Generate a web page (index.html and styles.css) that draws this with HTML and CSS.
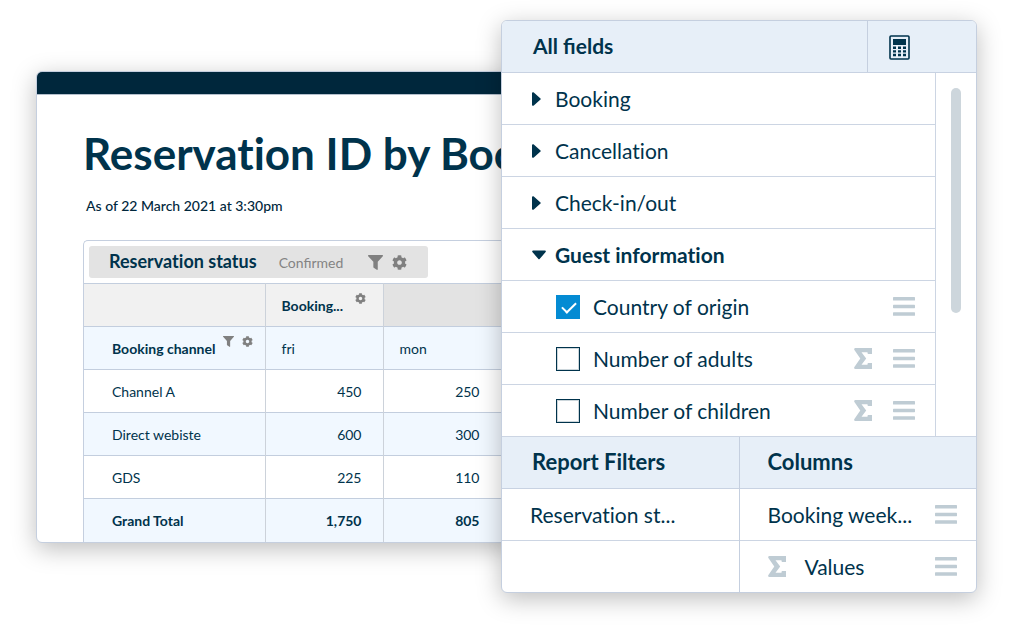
FILE: index.html
```html
<!DOCTYPE html>
<html lang="en">
<head>
<meta charset="utf-8">
<title>Reservation ID by Booking</title>
<link rel="stylesheet" href="styles.css">
</head>
<body>
<svg class="sprite" aria-hidden="true">
  <symbol id="funnel" viewBox="0 0 16 16"><path d="M.7 0h14.6c.7 0 .9.7.5 1.200L10.400 7.300v7.900c0 .6-.6.9-1.100.6L6.100 13.500a1 1 0 0 1-.4-.8V7.300L.2 1.200C-.2.7 0 0 .7 0z"/></symbol>
  <symbol id="gear" viewBox="0 0 512 512"><path d="M487.400 315.700l-42.600-24.600c4.300-23.200 4.300-47 0-70.200l42.600-24.600c4.900-2.800 7.100-8.600 5.500-14-11.100-35.600-30-67.800-54.700-94.600-3.800-4.100-10-5.100-14.800-2.300L380.800 110c-17.900-15.400-38.500-27.300-60.800-35.100V25.800c0-5.600-3.900-10.500-9.400-11.700-36.700-8.200-74.300-7.800-109.200 0-5.500 1.200-9.400 6.100-9.400 11.700V75c-22.200 7.900-42.800 19.800-60.800 35.100L88.700 85.500c-4.900-2.800-11-1.900-14.800 2.300-24.700 26.700-43.600 58.900-54.700 94.600-1.700 5.400.6 11.200 5.500 14L67.300 221c-4.300 23.200-4.300 47 0 70.200l-42.600 24.600c-4.900 2.800-7.100 8.600-5.500 14 11.100 35.600 30 67.800 54.700 94.600 3.800 4.100 10 5.100 14.800 2.300l42.600-24.600c17.900 15.400 38.500 27.300 60.800 35.100v49.200c0 5.600 3.900 10.500 9.400 11.700 36.700 8.200 74.300 7.800 109.200 0 5.500-1.200 9.400-6.100 9.400-11.700v-49.200c22.200-7.900 42.800-19.800 60.800-35.100l42.600 24.600c4.900 2.800 11 1.900 14.800-2.300 24.700-26.700 43.600-58.900 54.700-94.600 1.500-5.500-.7-11.300-5.600-14.100zM256 336c-44.100 0-80-35.900-80-80s35.900-80 80-80 80 35.900 80 80-35.900 80-80 80z"/></symbol>
  <symbol id="sigma" viewBox="0 0 18 21"><path d="M1.500 0H18v6h-3.500c-.5 0-1-.5-1-1v-.8H7.500l4.700 6.300L7.500 16.800h6V16c0-.5.5-1 1-1H18v6H1.500C.4 21-.2 19.800.4 19L6.300 10.500.4 2C-.2 1.200.4 0 1.500 0z"/></symbol>
  <symbol id="bars" viewBox="0 0 22 19"><rect y="0" width="22" height="3.500" rx=".6"/><rect y="7.700" width="22" height="3.500" rx=".6"/><rect y="15.300" width="22" height="3.500" rx=".6"/></symbol>
  <symbol id="calc" viewBox="0 0 21 25"><rect x="1" y="1" width="19" height="23" rx="1" fill="none" stroke="currentColor" stroke-width="1.600"/><path d="M4 4h13v6H4zM4 11.500h3v2.500H4zM9 11.500h3v2.500H9zM14 11.500h3v2.500h-3zM4 15.200h3v2.400H4zM9 15.200h3v2.400H9zM14 15.200h3v2.400h-3zM4 18.800h3v2.400H4zM9 18.800h3v2.400H9zM14 18.800h3v2.400h-3z"/></symbol>
  <symbol id="caret" viewBox="0 0 9 14"><path d="M0 1.200C0 .2 1 -.2 1.800.6L8.500 6.400c.4.3.4.9 0 1.200L1.800 13.400C1 14.200 0 13.800 0 12.800z"/></symbol>
  <symbol id="caret-down" viewBox="0 0 14 9"><path d="M1.200 0C.2 0-.2 1 .6 1.800L6.400 8.500c.3.4.9.4 1.200 0L13.400 1.800C14.200 1 13.800 0 12.800 0z"/></symbol>
</svg>
<main class="stage">
  <section class="report">
    <div class="report-bar"></div>
    <div class="report-body">
      <h1 class="report-title">Reservation ID by Booking</h1>
      <p class="report-date">As of 22 March 2021 at 3:30pm</p>
      <div class="grid">
        <div class="filter-row">
          <div class="filter-chip">
            <strong class="filter-name">Reservation status</strong>
            <span class="filter-value">Confirmed</span>
            <button class="icon-button" aria-label="Filter"><svg class="icon-md"><use href="#funnel"/></svg></button>
            <button class="icon-button" aria-label="Settings"><svg class="icon-md"><use href="#gear"/></svg></button>
          </div>
        </div>
        <table class="pivot">
          <colgroup><col class="col-name"><col class="col-day"><col class="col-day"><col></colgroup>
          <thead>
            <tr class="head-top"><th></th><th><span class="cell-tools tools-wide">Booking...<button class="icon-button tool-raised" aria-label="Column settings"><svg class="icon-sm"><use href="#gear"/></svg></button></span></th><th class="blank"></th><th class="blank"></th></tr>
            <tr class="tint"><th><span class="cell-tools">Booking channel<button class="icon-button tool-raised" aria-label="Filter channel"><svg class="icon-sm"><use href="#funnel"/></svg></button><button class="icon-button tool-raised" aria-label="Channel settings"><svg class="icon-sm"><use href="#gear"/></svg></button></span></th><th class="day">fri</th><th class="day">mon</th><th></th></tr>
          </thead>
          <tbody>
            <tr><td>Channel A</td><td class="num">450</td><td class="num">250</td><td></td></tr>
            <tr class="tint"><td>Direct webiste</td><td class="num">600</td><td class="num">300</td><td></td></tr>
            <tr><td>GDS</td><td class="num">225</td><td class="num">110</td><td></td></tr>
            <tr class="tint total"><td>Grand Total</td><td class="num">1,750</td><td class="num">805</td><td></td></tr>
          </tbody>
        </table>
      </div>
    </div>
  </section>

  <aside class="panel">
    <header class="panel-head">
      <h2 class="head-label">All fields</h2>
      <button class="calc-button" aria-label="Calculated field"><svg class="icon-calc"><use href="#calc"/></svg></button>
    </header>
    <div class="fields">
      <ul class="field-list">
        <li class="row"><button class="group"><svg class="caret"><use href="#caret"/></svg>Booking</button></li>
        <li class="row"><button class="group"><svg class="caret"><use href="#caret"/></svg>Cancellation</button></li>
        <li class="row"><button class="group"><svg class="caret"><use href="#caret"/></svg>Check-in/out</button></li>
        <li class="row"><button class="group open"><svg class="caret"><use href="#caret-down"/></svg>Guest information</button></li>
        <li class="row field"><label class="field-label"><input type="checkbox" class="check" checked>Country of origin</label><svg class="bars"><use href="#bars"/></svg></li>
        <li class="row field"><label class="field-label"><input type="checkbox" class="check">Number of adults</label><svg class="sigma"><use href="#sigma"/></svg><svg class="bars"><use href="#bars"/></svg></li>
        <li class="row field"><label class="field-label"><input type="checkbox" class="check">Number of children</label><svg class="sigma"><use href="#sigma"/></svg><svg class="bars"><use href="#bars"/></svg></li>
      </ul>
      <div class="scroll"><div class="thumb"></div></div>
    </div>
    <div class="zones">
      <section class="zone">
        <h2 class="zone-head">Report Filters</h2>
        <div class="row zone-row">Reservation st...</div>
        <div class="row zone-row"></div>
      </section>
      <section class="zone zone-columns">
        <h2 class="zone-head">Columns</h2>
        <div class="row zone-row"><span class="zone-text">Booking week...</span><svg class="bars"><use href="#bars"/></svg></div>
        <div class="row zone-row"><svg class="sigma"><use href="#sigma"/></svg><span class="zone-text">Values</span><svg class="bars"><use href="#bars"/></svg></div>
      </section>
    </div>
  </aside>
</main>
</body>
</html>
```
FILE: styles.css
```css
* { box-sizing: border-box; }
body {
  margin: 0;
  background: #fff;
  color: #00334c;
  font-family: Lato, "Liberation Sans", sans-serif;
  font-variant-ligatures: none;
  overflow-x: hidden;
}
h1, h2, p, ul { margin: 0; padding: 0; }
button {
  padding: 0;
  border: 0;
  background: none;
  color: inherit;
  font: inherit;
  font-variant-ligatures: none;
}
svg { display: block; flex: none; fill: currentColor; }
.sprite { position: absolute; width: 0; height: 0; }

.stage {
  display: flex;
  align-items: flex-start;
  padding: 20px 35px 36px 36px;
}

/* Report card */
.report {
  flex: 1;
  min-width: 0;
  margin: 51px -16px 0 0;
  border: 1px solid #c5cfdf;
  border-radius: 6px;
  background: #fff;
  box-shadow: 0 6px 24px rgba(0, 0, 0, 0.26);
  overflow: hidden;
}
.report-bar {
  height: 23px;
  border-bottom: 1px solid #b4bfcc;
  background: #00273c;
}
.report-body { padding: 32px 0 0 46px; }
.report-title {
  font-size: 44px;
  line-height: 52px;
  font-weight: 700;
  white-space: nowrap;
}
.report-date {
  margin: 18px 0 25px;
  padding-left: 3px;
  font-size: 14px;
  line-height: 18px;
  font-weight: 500;
  color: #00273c;
}
.grid {
  border: 1px solid #c5cfdf;
  border-width: 1px 0 0 1px;
  border-radius: 5px 0 0 0;
}
.filter-row { padding: 5px; }
.filter-chip {
  display: flex;
  align-items: baseline;
  width: 339px;
  height: 32px;
  padding-left: 20px;
  border-radius: 3px;
  background: #e3e3e3;
}
.filter-name { margin-right: 22px; font-size: 18px; line-height: 30px; }
.filter-value {
  margin-right: 25px;
  font-size: 14px;
  font-variant-ligatures: normal;
  color: #848484;
}
.icon-button { display: block; margin-right: 9px; color: #808080; }
.filter-chip .icon-button { align-self: center; }
.icon-md { width: 15px; height: 15px; }
.icon-sm { width: 11px; height: 11px; }

.pivot {
  width: 100%;
  table-layout: fixed;
  border-collapse: collapse;
  font-size: 14px;
  line-height: 18px;
}
.col-name { width: 181px; }
.col-day { width: 118px; }
.pivot th, .pivot td {
  height: 43px;
  padding: 2px 0 0 16px;
  border-top: 1px solid #c3cede;
  border-right: 1px solid #ccd2da;
  text-align: left;
  white-space: nowrap;
}
.pivot th:first-child, .pivot td:first-child { padding-left: 28px; }
.pivot .num { padding-right: 21px; text-align: right; }
.pivot .day { font-weight: 400; }
.head-top th { background: #f1f1f1; }
.head-top .blank { border-right: 0; background: #e3e3e3; }
.tint { background: #f1f8ff; }
.total { font-weight: 700; }
.cell-tools { display: flex; gap: 8px; }
.tools-wide { gap: 12px; }
.cell-tools .tool-raised { height: 11px; margin: -4px 0 0; }

/* Field panel */
.panel {
  position: relative;
  flex: none;
  width: 476px;
  border: 1px solid #c5cfdf;
  border-radius: 6px;
  background: #fff;
  box-shadow: 0 6px 24px rgba(0, 0, 0, 0.26);
  font-size: 21px;
  line-height: 26px;
  overflow: hidden;
}
.panel-head, .zone-head { background: #e7eff8; border-bottom: 1px solid #c8d2e2; }
.panel-head { display: flex; height: 52px; }
.head-label, .zone-head { font-size: 22px; line-height: 50px; font-weight: 700; }
.head-label { flex: 1; padding-left: 31px; font-size: 21px; font-variant-ligatures: normal; }
.calc-button {
  width: 109px;
  padding: 2px 0 0 21px;
  border-left: 1px solid #c5cfdf;
}
.icon-calc { width: 21px; height: 25px; }
.fields { display: flex; }
.field-list { flex: 1; list-style: none; }
.row {
  display: flex;
  align-items: center;
  height: 52px;
  border-bottom: 1px solid #ccd5e3;
}
.group {
  display: flex;
  align-items: center;
  padding-left: 30px;
}
.caret { width: 9px; height: 14px; margin-right: 14px; }
.open .caret { width: 14px; margin-right: 9px; }
.open { font-weight: 700; }
.field { padding: 0 20px 0 54px; gap: 21px; }
.field-label { display: flex; flex: 1; align-items: center; gap: 13px; }
.check {
  appearance: none;
  width: 24px;
  height: 24px;
  margin: 0;
  border: 1px solid #00334c;
  outline: 1px solid rgba(0, 51, 76, 0.2);
  outline-offset: -2px;
  background: #fff;
}
.check:checked {
  border-color: #048bd3;
  outline: 0;
  background: #048bd3;
}
.check:checked::before {
  content: "";
  display: block;
  width: 6px;
  height: 12px;
  margin: 3px 0 0 8px;
  border: solid #fff;
  border-width: 0 2px 2px 0;
  transform: rotate(45deg);
}
.sigma { width: 18px; height: 21px; color: #bfccd4; }
.bars { width: 22px; height: 19px; color: #bfccd4; }
.scroll {
  width: 41px;
  padding: 15px 0 0 15px;
  border-left: 1px solid #ccd5e3;
  border-bottom: 1px solid #ccd5e3;
}
.thumb { width: 10px; height: 225px; border-radius: 5px; background: #cdd6dc; }
.zones { display: flex; }
.zone { flex: 1; }
.zone-columns { border-left: 1px solid #c5cfdf; }
.zone-head { height: 52px; padding-left: 30px; }
.zone-columns .zone-head { padding-left: 28px; }
.zone-row { padding: 0 19px 0 28px; gap: 19px; }
.zone-row:last-child { height: 51px; border-bottom: 0; }
.zone-text { flex: 1; white-space: nowrap; }
```
